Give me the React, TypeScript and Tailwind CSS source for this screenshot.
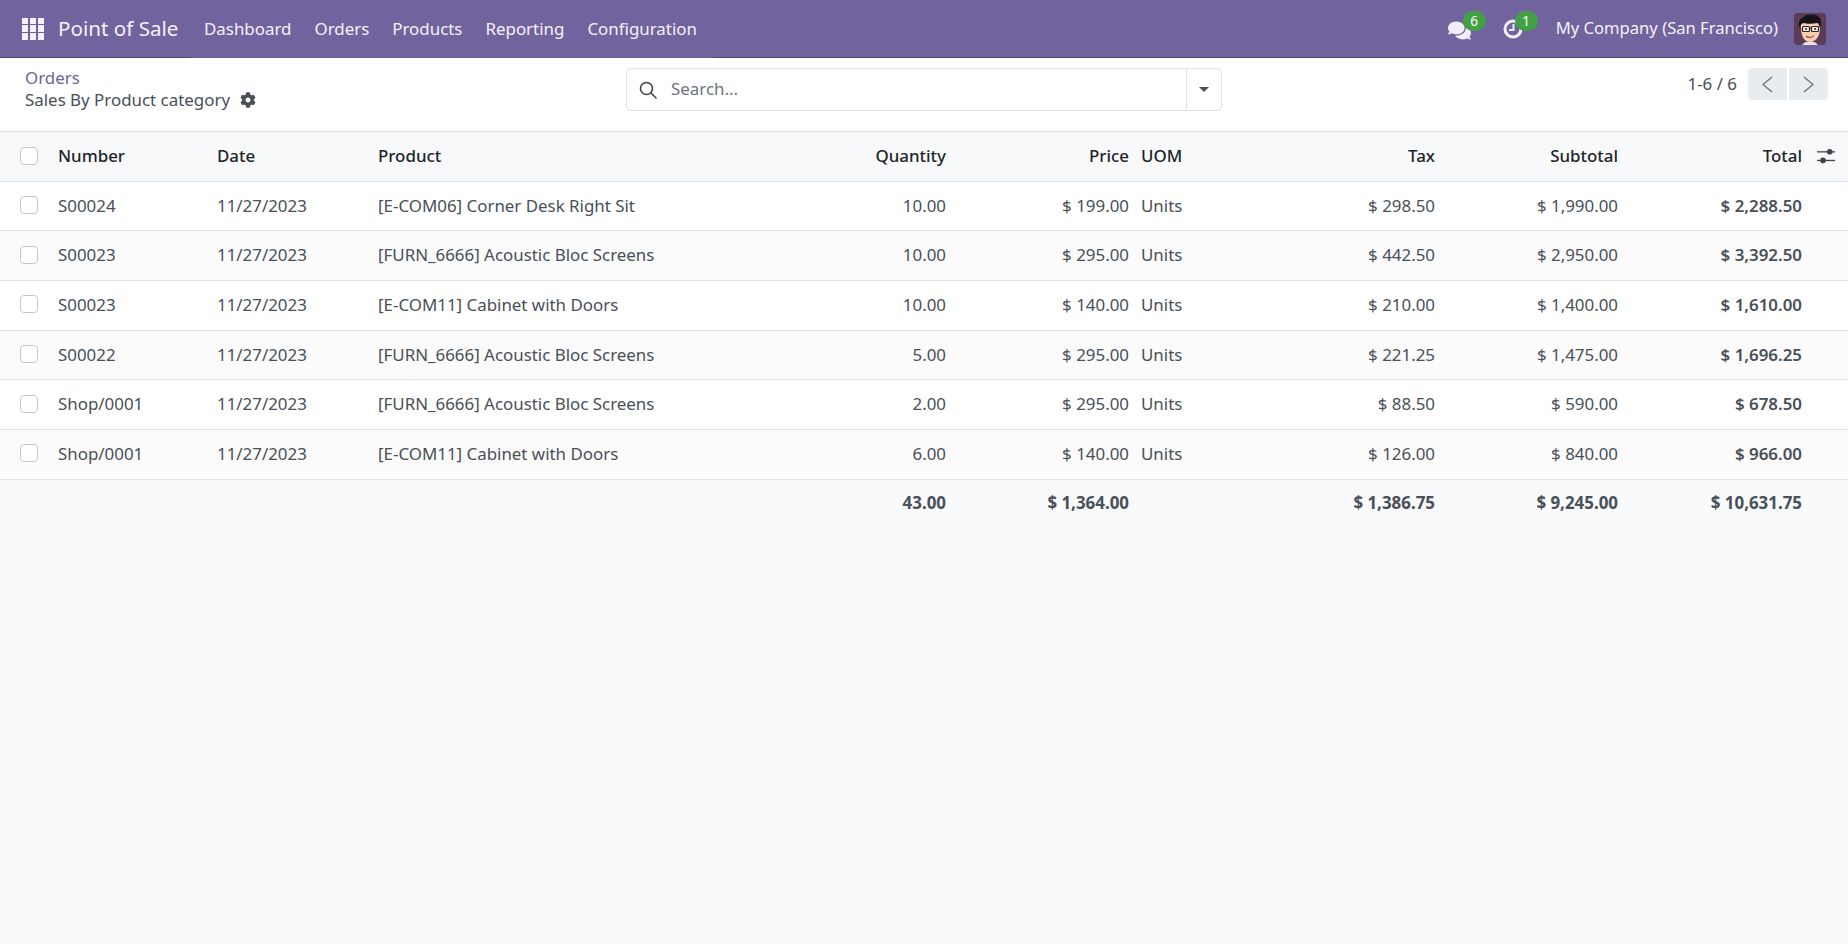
import { FaCog, FaComments } from 'react-icons/fa';

const rows = [
  { number: 'S00024', product: '[E-COM06] Corner Desk Right Sit', qty: '10.00', price: '$ 199.00', tax: '$ 298.50', subtotal: '$ 1,990.00', total: '$ 2,288.50' },
  { number: 'S00023', product: '[FURN_6666] Acoustic Bloc Screens', qty: '10.00', price: '$ 295.00', tax: '$ 442.50', subtotal: '$ 2,950.00', total: '$ 3,392.50' },
  { number: 'S00023', product: '[E-COM11] Cabinet with Doors', qty: '10.00', price: '$ 140.00', tax: '$ 210.00', subtotal: '$ 1,400.00', total: '$ 1,610.00' },
  { number: 'S00022', product: '[FURN_6666] Acoustic Bloc Screens', qty: '5.00', price: '$ 295.00', tax: '$ 221.25', subtotal: '$ 1,475.00', total: '$ 1,696.25' },
  { number: 'Shop/0001', product: '[FURN_6666] Acoustic Bloc Screens', qty: '2.00', price: '$ 295.00', tax: '$ 88.50', subtotal: '$ 590.00', total: '$ 678.50' },
  { number: 'Shop/0001', product: '[E-COM11] Cabinet with Doors', qty: '6.00', price: '$ 140.00', tax: '$ 126.00', subtotal: '$ 840.00', total: '$ 966.00' },
];

const navItems = ['Dashboard', 'Orders', 'Products', 'Reporting', 'Configuration'];

const Checkbox = () => (
  <div className="w-[18px] h-[18px] ml-[20px] -mt-px bg-white border border-[#c4c8cc] rounded-[4px]" />
);

const AppsIcon = () => (
  <div className="grid grid-cols-3 gap-[1.5px] w-[22px] h-[22px]">
    {Array.from({ length: 9 }).map((_, i) => (
      <div key={i} className="bg-[#f4f2f8]" />
    ))}
  </div>
);

const ClockIcon = () => (
  <svg width="20" height="20" viewBox="0 0 20 20" fill="none" stroke="#f1eff6" strokeWidth="3">
    <circle cx="10" cy="10" r="8" />
    <path d="M10.5 5v6H6" strokeWidth="2" />
  </svg>
);

const SearchIcon = () => (
  <svg width="18" height="18" viewBox="0 0 18 18" fill="none" stroke="#3f444a" strokeWidth="1.6">
    <circle cx="7.5" cy="7.5" r="6" />
    <path d="M12 12l5 5" strokeLinecap="round" />
  </svg>
);

const AdjustIcon = () => (
  <svg width="18" height="16" viewBox="0 0 18 16" fill="#3f444a">
    <rect x="0" y="3.2" width="18" height="1.3" />
    <rect x="0" y="11.8" width="18" height="1.3" />
    <circle cx="12.7" cy="3.8" r="2.8" />
    <circle cx="6" cy="12.4" r="2.8" />
  </svg>
);

const PagerChevron = ({ flip }: { flip?: boolean }) => (
  <svg width="11" height="17" viewBox="0 0 11 17" fill="none" stroke="#6c757d" strokeWidth="1.4">
    <path d={flip ? 'M1 1l9 7.5-9 7.5' : 'M10 1L1 8.5l9 7.5'} />
  </svg>
);

const Avatar = () => (
  <svg width="32" height="32" viewBox="0 0 32 32" className="rounded-[4px]">
    <rect width="32" height="32" fill="#5b3b55" />
    <path d="M7 15c0 9 4 14 9 14s10-5 10-14V10H7z" fill="#f5cdb0" />
    <path d="M24 32c-2-3-5-4-8-3-3-1-6 0-8 3z" fill="#e9e2dc" />
    <path d="M5 15c-1-6 1-10 5-11 2-3 10-3 14-1 3 2 4 7 2 12l-2-5c-5 1-11 1-15 0-2 1-3 3-4 5z" fill="#17131a" />
    <rect x="8.5" y="13.5" width="7" height="5" rx="1" fill="#fbe9da" stroke="#2a2428" strokeWidth="1.2" />
    <rect x="17.5" y="13.5" width="7" height="5" rx="1" fill="#fbe9da" stroke="#2a2428" strokeWidth="1.2" />
    <path d="M15.5 15h2" stroke="#2a2428" strokeWidth="1" />
    <circle cx="12" cy="16" r="1" fill="#2a2428" />
    <circle cx="21" cy="16" r="1" fill="#2a2428" />
    <path d="M12 23c2 2 6 2 8-.5" stroke="#8a4a3a" strokeWidth="1.2" fill="none" />
  </svg>
);

const Badge = ({ value, className }: { value: string; className: string }) => (
  <span className={`absolute -top-[8px] w-[23px] h-[20px] rounded-full bg-[#42a145] text-white text-[13.5px] leading-[20px] text-center ${className}`}>
    {value}
  </span>
);

export default function App() {
  return (
    <div className="min-h-[944px] bg-[#f9fafb] text-[#495057] text-[16.9px] font-['Noto_Sans','Open_Sans',sans-serif]">
      {/* Top bar */}
      <nav className="h-[58px] flex items-stretch bg-[#71639e] text-white">
        <div className="w-[191px] flex items-center border-b border-[#4f4570]">
          <div className="ml-[22px]">
            <AppsIcon />
          </div>
          <span className="ml-[14px] text-[20.6px] text-[#f4f2f8]">Point of Sale</span>
        </div>
        <div className="w-[522px] flex items-center pl-[13px] gap-[23px] text-[#f4f2f8]">
          {navItems.map((item) => (
            <span key={item}>{item}</span>
          ))}
        </div>
        <div className="flex-1 flex items-center justify-end border-b border-[#4f4570] pr-[22px]">
          <div className="relative w-[23px] h-[20px] mr-[32px] text-[#f1eff6]">
            <FaComments size={23} />
            <Badge value="6" className="left-[15px]" />
          </div>
          <div className="relative w-[20px] h-[20px] mr-[33px]">
            <ClockIcon />
            <Badge value="1" className="left-[12px]" />
          </div>
          <span className="text-[16.6px] text-[#f4f2f8]">My Company (San Francisco)</span>
          <div className="ml-[16px] h-[32px]">
            <Avatar />
          </div>
        </div>
      </nav>

      {/* Control panel */}
      <div className="h-[74px] flex items-start bg-white border-b border-[#dee2e6]">
        <div className="w-[626px] pl-[25px] pt-[9px]">
          <div className="text-[#71639e] leading-[22px]">Orders</div>
          <div className="flex items-center gap-[10px] leading-[22px]">
            <span>Sales By Product category</span>
            <FaCog size={16} className="text-[#495057]" />
          </div>
        </div>
        <div className="mt-[10px] w-[596px] h-[43px] flex border border-[#dee2e6] rounded-[4px]">
          <div className="flex-1 flex items-center pl-[12px] gap-[14px]">
            <SearchIcon />
            <span className="text-[#6c757d] -mt-[2px]">Search...</span>
          </div>
          <div className="w-[35px] flex items-center justify-center border-l border-[#dee2e6]">
            <div className="w-0 h-0 border-x-[5px] border-x-transparent border-t-[5px] border-t-[#495057]" />
          </div>
        </div>
        <div className="flex-1 flex items-center justify-end pr-[20px] mt-[10px]">
          <span className="mr-[11px]">1-6 / 6</span>
          <div className="w-[39px] h-[32px] flex items-center justify-center bg-[#e9ecef] rounded-l-[4px]">
            <PagerChevron />
          </div>
          <div className="w-[39px] h-[32px] ml-[2px] flex items-center justify-center bg-[#e9ecef] rounded-r-[4px]">
            <PagerChevron flip />
          </div>
        </div>
      </div>

      {/* Table */}
      <table className="w-full table-fixed border-collapse">
        <colgroup>
          <col className="w-[52px]" />
          <col className="w-[159px]" />
          <col className="w-[161px]" />
          <col className="w-[428px]" />
          <col className="w-[152px]" />
          <col className="w-[183px]" />
          <col className="w-[145px]" />
          <col className="w-[161px]" />
          <col className="w-[183px]" />
          <col className="w-[184px]" />
          <col className="w-[40px]" />
        </colgroup>
        <thead>
          <tr className="h-[49px] bg-[#f8f9fa] text-[#212529] font-medium border-b border-[#dee2e6]">
            <th className="font-medium"><Checkbox /></th>
            <th className="font-medium px-[6px] pb-[2px] text-left">Number</th>
            <th className="font-medium px-[6px] pb-[2px] text-left">Date</th>
            <th className="font-medium px-[6px] pb-[2px] text-left">Product</th>
            <th className="font-medium px-[6px] pb-[2px] text-right">Quantity</th>
            <th className="font-medium px-[6px] pb-[2px] text-right">Price</th>
            <th className="font-medium px-[6px] pb-[2px] text-left">UOM</th>
            <th className="font-medium px-[6px] pb-[2px] text-right">Tax</th>
            <th className="font-medium px-[6px] pb-[2px] text-right">Subtotal</th>
            <th className="font-medium px-[6px] pb-[2px] text-right">Total</th>
            <th className="font-medium"><div className="flex justify-center mr-[4px]"><AdjustIcon /></div></th>
          </tr>
        </thead>
        <tbody>
          {rows.map((row, i) => (
            <tr key={i} className="h-[49.7px] border-b border-[#dee2e6] bg-white even:bg-[#fbfbfc] [&>td]:pb-px">
              <td><Checkbox /></td>
              <td className="px-[6px]">{row.number}</td>
              <td className="px-[6px]">11/27/2023</td>
              <td className="px-[6px]">{row.product}</td>
              <td className="px-[6px] text-right">{row.qty}</td>
              <td className="px-[6px] text-right">{row.price}</td>
              <td className="px-[6px]">Units</td>
              <td className="px-[6px] text-right">{row.tax}</td>
              <td className="px-[6px] text-right">{row.subtotal}</td>
              <td className="px-[6px] text-right font-semibold">{row.total}</td>
              <td />
            </tr>
          ))}
        </tbody>
        <tfoot>
          <tr className="h-[47px] font-bold">
            <td />
            <td />
            <td />
            <td />
            <td className="px-[6px] text-right">43.00</td>
            <td className="px-[6px] text-right">$ 1,364.00</td>
            <td />
            <td className="px-[6px] text-right">$ 1,386.75</td>
            <td className="px-[6px] text-right">$ 9,245.00</td>
            <td className="px-[6px] text-right">$ 10,631.75</td>
            <td />
          </tr>
        </tfoot>
      </table>
    </div>
  );
}
